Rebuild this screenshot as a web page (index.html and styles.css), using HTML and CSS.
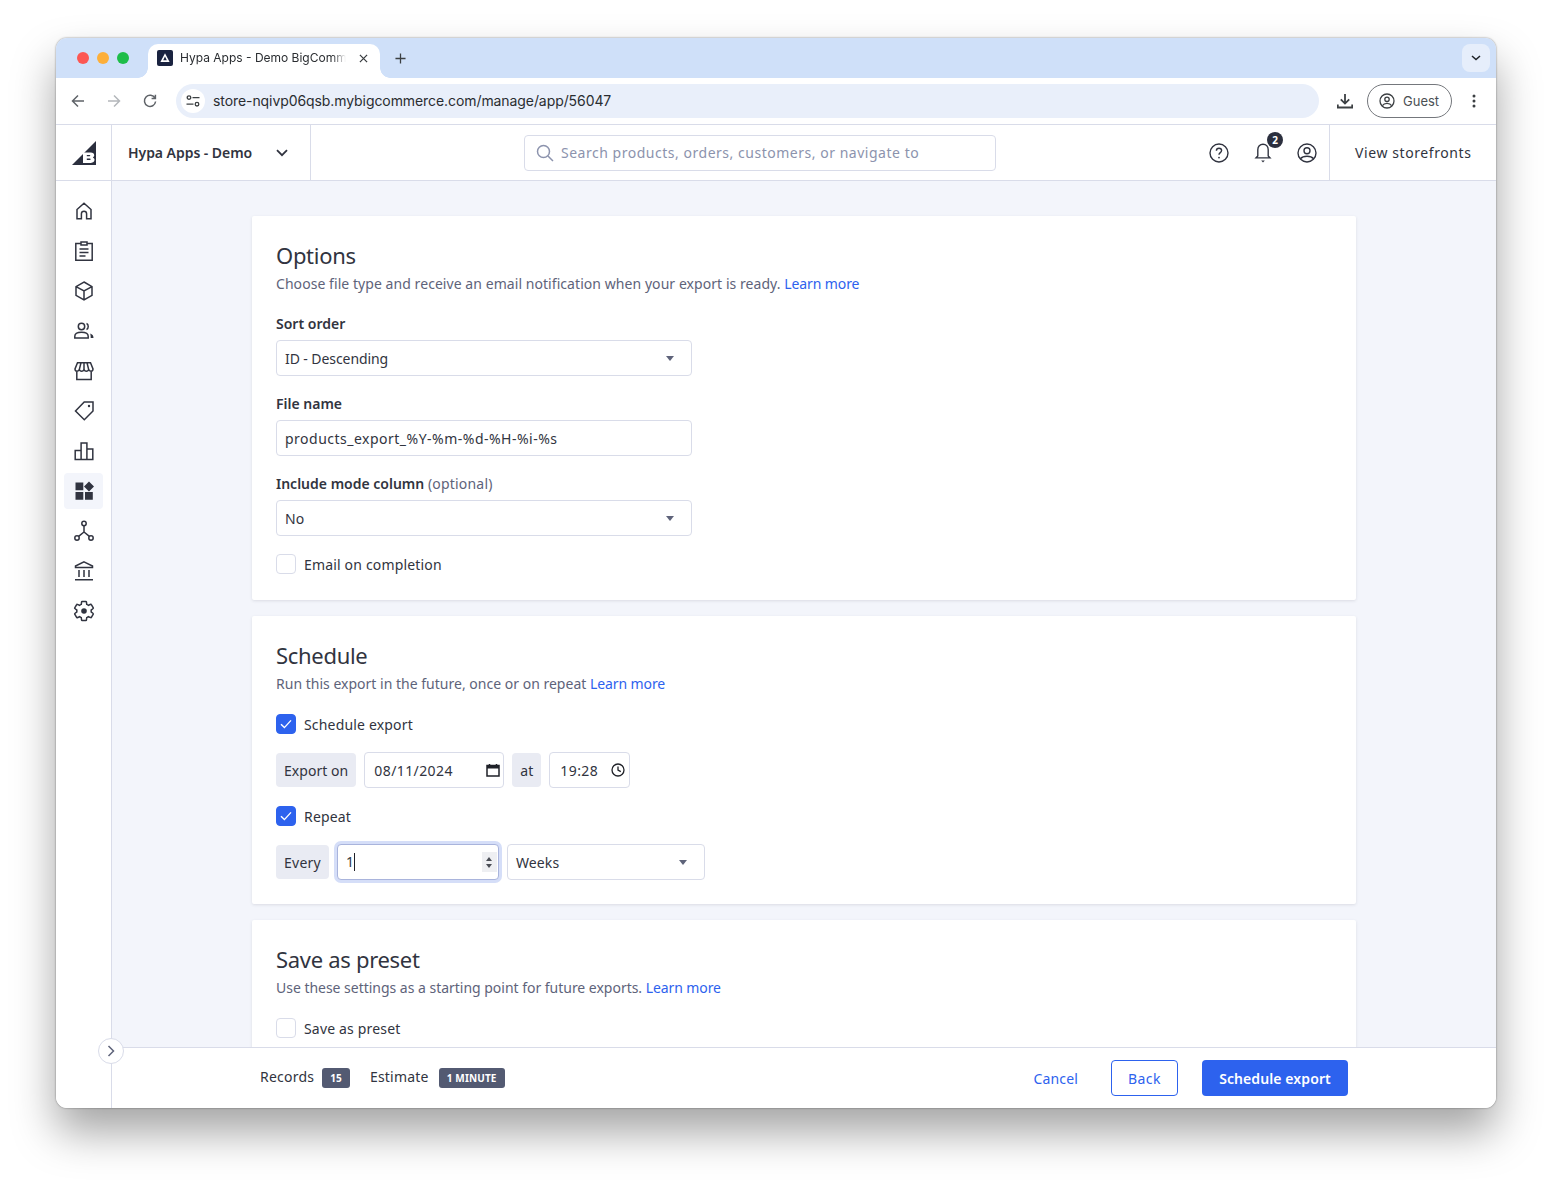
FILE: index.html
```html
<!DOCTYPE html>
<html lang="en">
<head>
<meta charset="utf-8">
<title>Hypa Apps - Demo BigCommerce</title>
<link rel="stylesheet" href="styles.css">
</head>
<body>
<div class="window">
  <div class="tabstrip">
    <div class="lights"><span class="light red"></span><span class="light amber"></span><span class="light green"></span></div>
    <div class="tab">
      <svg class="favicon" viewBox="0 0 16 16"><rect width="16" height="16" rx="2" fill="#1a2340"/><path d="M8 3.2 12.6 12H3.4zM8 6.6 6.2 10.2h3.6z" fill="#fff" fill-rule="evenodd"/></svg>
      <span class="tab-title">Hypa Apps - Demo BigComm</span>
      <svg class="tab-close" viewBox="0 0 10 10"><path d="M1 1l8 8M9 1l-8 8" stroke="#3c4043" stroke-width="1.4" fill="none"/></svg>
    </div>
    <svg class="new-tab" viewBox="0 0 12 12"><path d="M6 .5v11M.5 6h11" stroke="#3c4043" stroke-width="1.4" fill="none"/></svg>
    <div class="tab-search"><svg viewBox="0 0 10 6" width="10" height="6"><path d="M1 1l4 3.6L9 1" stroke="#1f2328" stroke-width="1.5" fill="none"/></svg></div>
  </div>
  <div class="toolbar">
    <svg class="tb-icon" viewBox="0 0 14 14"><path d="M13 7H2M7 1.5 1.5 7 7 12.5" stroke="#5f6368" stroke-width="1.5" fill="none"/></svg>
    <svg class="tb-icon" viewBox="0 0 14 14"><path d="M1 7h11M7 1.5 12.5 7 7 12.5" stroke="#b4b7bb" stroke-width="1.5" fill="none"/></svg>
    <svg class="tb-icon" viewBox="0 0 14 14"><path d="M12 4.2A5.6 5.6 0 1 0 12.6 7.5M12.4 .8v3.8H8.6" stroke="#5f6368" stroke-width="1.5" fill="none"/></svg>
    <div class="omnibox">
      <span class="site-icon"><svg viewBox="0 0 14 12" width="14" height="12"><circle cx="3" cy="2.6" r="1.8" fill="none" stroke="#3c4043" stroke-width="1.3"/><path d="M6.5 2.6h7M.5 9.2h7" stroke="#3c4043" stroke-width="1.3"/><circle cx="11" cy="9.2" r="1.8" fill="none" stroke="#3c4043" stroke-width="1.3"/></svg></span>
      <span class="url">store-nqivp06qsb.mybigcommerce.com/manage/app/56047</span>
    </div>
    <svg class="download" viewBox="0 0 16 16"><path d="M8 1v9M3.8 6.4 8 10.6l4.2-4.2M.8 11.5v3h14.400v-3" stroke="#3c4043" stroke-width="1.800" fill="none"/></svg>
    <div class="guest">
      <svg viewBox="0 0 16 16" width="16" height="16"><circle cx="8" cy="8" r="7" fill="none" stroke="#3c4043" stroke-width="1.3"/><circle cx="8" cy="6.3" r="2.2" fill="none" stroke="#3c4043" stroke-width="1.3"/><path d="M3.4 12.6c1-1.6 2.8-2.2 4.6-2.2s3.6.6 4.6 2.2" fill="none" stroke="#3c4043" stroke-width="1.3"/></svg>
      <span>Guest</span>
    </div>
    <svg class="kebab" viewBox="0 0 4 14"><circle cx="2" cy="2" r="1.5" fill="#3c4043"/><circle cx="2" cy="7" r="1.5" fill="#3c4043"/><circle cx="2" cy="12" r="1.5" fill="#3c4043"/></svg>
  </div>
  <header class="apphead">
    <div class="brand"><svg viewBox="0 0 24 24" width="24" height="24"><path d="M24 0v24H0z" fill="#2b2f3e"/><path d="M11 11.500h7.800c2.100 0 3.400 1.100 3.400 2.700 0 1-.5 1.800-1.400 2.200 1.100.4 1.700 1.300 1.700 2.400 0 1.800-1.400 3.100-3.600 3.100H11zm3.800 3.700h2.700c.5 0 .8-.2.800-.6s-.3-.6-.8-.6h-2.700zm0 3.800h3c.6 0 .9-.2.900-.7s-.3-.7-.9-.7h-3z" fill="#fff" fill-rule="evenodd"/></svg></div>
    <div class="store"><span>Hypa Apps - Demo</span><svg viewBox="0 0 12 8" width="12" height="8"><path d="M1 1.2l5 5 5-5" stroke="#313440" stroke-width="1.8" fill="none"/></svg></div>
    <div class="search">
      <svg viewBox="0 0 18 18" width="18" height="18"><circle cx="7.5" cy="7.5" r="6" fill="none" stroke="#8c93ad" stroke-width="1.5"/><path d="M12 12l5 5" stroke="#8c93ad" stroke-width="1.5"/></svg>
      <span>Search products, orders, customers, or navigate to</span>
    </div>
    <div class="head-icons">
      <svg viewBox="0 0 20 20" width="20" height="20"><circle cx="10" cy="10" r="9" fill="none" stroke="#313440" stroke-width="1.4"/><path d="M7.4 7.8c0-1.5 1.2-2.5 2.6-2.5s2.6 1 2.6 2.3c0 2-2.6 2-2.6 4.2" fill="none" stroke="#313440" stroke-width="1.4"/><circle cx="10" cy="14.6" r=".9" fill="#313440"/></svg>
      <div class="bell">
        <svg viewBox="0 0 20 22" width="20" height="22"><path d="M10 2.2c-3.1 0-5.200 2.400-5.200 5.500v6.200l-1.800 2h14l-1.800-2V7.700c0-3.100-2.100-5.500-5.200-5.500z" fill="none" stroke="#313440" stroke-width="1.4"/><path d="M8.2 18.6h3.600L10 20.400z" fill="#313440"/></svg>
        <span class="bell-badge">2</span>
      </div>
      <svg viewBox="0 0 20 20" width="20" height="20"><circle cx="10" cy="10" r="9" fill="none" stroke="#313440" stroke-width="1.4"/><circle cx="10" cy="7.8" r="3" fill="none" stroke="#313440" stroke-width="1.4"/><path d="M3.4 15.8c1.600-2 4-2.600 6.600-2.600s5 .6 6.600 2.600" fill="none" stroke="#313440" stroke-width="1.4"/></svg>
    </div>
    <div class="storefronts">View storefronts</div>
  </header>
  <div class="body">
    <nav class="sidebar">
      <a class="nav-item"><svg viewBox="0 0 24 24"><path d="M5 19.800v-9.300L12 4.300l7 6.200v9.300h-4.400v-5a2.600 2.600 0 0 0-5.200 0v5z"/></svg></a>
      <a class="nav-item"><svg viewBox="0 0 24 24"><path d="M9 4.500H3.800v16.700h16.400V4.500H15M9 3h6v3H9zM7.500 10h9M7.500 13.500h9M7.500 17h6"/></svg></a>
      <a class="nav-item"><svg viewBox="0 0 24 24"><path d="M12 3l8 4.600v8.800L12 21l-8-4.600V7.600zM4 7.600 12 12l8-4.400M12 12v9"/></svg></a>
      <a class="nav-item"><svg viewBox="0 0 24 24"><circle cx="9.500" cy="7.500" r="3.200"/><path d="M2.800 19v-1.800c0-2.800 3.300-4 6.700-4s6.700 1.200 6.700 4V19z"/><path d="M14.500 4.500c2.300.7 2.300 5.300 0 6"/><path class="solid" d="M18.200 14.500c2 .8 3.300 2 3.300 4.500h-2.800c0-2-.2-3.300-.5-4.500z"/></svg></a>
      <a class="nav-item"><svg viewBox="0 0 24 24"><path d="M4.800 12.500v8h14.400v-8M5.500 3.800h13L21 10c0 2.800-3.500 2.800-4.300.6-1 2.200-3.700 2.200-4.700 0-1 2.200-3.700 2.200-4.700 0C6.500 12.800 3 12.800 3 10zM9 3.800 7.300 10.600M12 3.800v6.800M15 3.800l1.700 6.800"/></svg></a>
      <a class="nav-item"><svg viewBox="0 0 24 24"><path d="M21 3v9l-8.700 8.800L3.500 12l8.700-9z"/><circle class="solid" cx="17" cy="7" r="1.200"/></svg></a>
      <a class="nav-item"><svg viewBox="0 0 24 24"><path d="M3.200 20.500v-9h5.900v9zM9.100 20.500V4h5.800v16.500zM14.900 20.500V10h5.900v10.500z"/></svg></a>
      <a class="nav-item active"><svg viewBox="0 0 24 24"><path class="solid" d="M3.500 3.500h7.800v7.800H3.500zM3.500 13h7.800v7.800H3.500zM13 13h7.800v7.800H13zM17 2.400l5 5-5 5-5-5z"/></svg></a>
      <a class="nav-item"><svg viewBox="0 0 24 24"><circle cx="12" cy="4.500" r="2.200"/><circle cx="5" cy="19" r="2.200"/><circle cx="19" cy="19" r="2.200"/><path d="M12 6.700V13M12 13l-5.400 4.400M12 13l5.400 4.400"/></svg></a>
      <a class="nav-item"><svg viewBox="0 0 24 24"><path d="M12 2.800 20.500 7v1.500h-17V7zM7 11v7M12 11v7M17 11v7M3 20.800h18"/></svg></a>
      <a class="nav-item"><svg viewBox="0 0 24 24"><path d="M19.140 12.940c.04-.3.06-.61.06-.94 0-.32-.02-.64-.07-.94l2.030-1.580c.18-.14.23-.41.12-.61l-1.920-3.320c-.12-.22-.37-.29-.59-.22l-2.390.96c-.5-.38-1.030-.7-1.620-.94l-.36-2.540c-.04-.24-.24-.41-.48-.41h-3.840c-.24 0-.43.17-.47.41l-.36 2.540c-.59.24-1.130.57-1.620.94l-2.390-.96c-.22-.08-.47 0-.59.22L2.740 8.870c-.12.21-.08.47.12.61l2.030 1.580c-.05.3-.09.63-.09.94s.02.64.07.94l-2.030 1.580c-.18.14-.23.41-.12.61l1.920 3.320c.12.22.37.29.59.22l2.390-.96c.5.38 1.030.7 1.620.94l.36 2.540c.05.24.24.41.48.41h3.840c.24 0 .44-.17.47-.41l.36-2.540c.59-.24 1.130-.56 1.620-.94l2.390.96c.22.08.47 0 .59-.22l1.920-3.320c.12-.22.07-.47-.12-.61l-2.010-1.580z"/><circle class="solid" cx="12" cy="12" r="2.800"/></svg></a>
    </nav>
    <div class="main">
      <main class="scroll">
        <section class="card">
          <h2>Options</h2>
          <p class="sub loose">Choose file type and receive an email notification when your export is ready. <a class="link">Learn more</a></p>
          <div class="field">
            <label class="label">Sort order</label>
            <div class="control select wide"><span class="tight">ID - Descending</span><i class="caret"></i></div>
          </div>
          <div class="field">
            <label class="label">File name</label>
            <div class="control wide"><span class="filename">products_export_%Y-%m-%d-%H-%i-%s</span></div>
          </div>
          <div class="field">
            <label class="label">Include mode column <span class="optional">(optional)</span></label>
            <div class="control select wide"><span>No</span><i class="caret"></i></div>
          </div>
          <div class="check"><span class="box"></span><span>Email on completion</span></div>
        </section>
        <section class="card">
          <h2>Schedule</h2>
          <p class="sub">Run this export in the future, once or on repeat <a class="link">Learn more</a></p>
          <div class="check"><span class="box on"><svg viewBox="0 0 12 10" width="12" height="10"><path d="M1 5.200l3.400 3.400L11 1.400" stroke="#fff" stroke-width="1.400" fill="none"/></svg></span><span>Schedule export</span></div>
          <div class="inline">
            <span class="chip">Export on</span>
            <div class="control date"><span>08/11/2024</span><svg viewBox="0 0 14 14" width="14" height="14"><path d="M1 2.500h12v10.500H1zM3.500 1v2M10.500 1v2" fill="none" stroke="#1f2128" stroke-width="1.500"/><path d="M1 2.500h12v3H1z" fill="#1f2128"/></svg></div>
            <span class="chip">at</span>
            <div class="control time"><span>19:28</span><svg viewBox="0 0 14 14" width="14" height="14"><circle cx="7" cy="7" r="6" fill="none" stroke="#1f2128" stroke-width="1.300"/><path d="M7 3.400V7l2.800 1.600" fill="none" stroke="#1f2128" stroke-width="1.300"/></svg></div>
          </div>
          <div class="check"><span class="box on"><svg viewBox="0 0 12 10" width="12" height="10"><path d="M1 5.200l3.400 3.400L11 1.400" stroke="#fff" stroke-width="1.400" fill="none"/></svg></span><span>Repeat</span></div>
          <div class="inline">
            <span class="chip every">Every</span>
            <div class="control number"><span class="caret-text">1</span><span class="spin"><i class="up"></i><i class="down"></i></span></div>
            <div class="control select weeks"><span>Weeks</span><i class="caret"></i></div>
          </div>
        </section>
        <section class="card">
          <h2>Save as preset</h2>
          <p class="sub snug">Use these settings as a starting point for future exports. <a class="link">Learn more</a></p>
          <div class="check"><span class="box"></span><span>Save as preset</span></div>
        </section>
      </main>
      <footer class="actions">
        <span class="stat">Records</span><span class="badge">15</span>
        <span class="stat est">Estimate</span><span class="badge wide-gap">1 MINUTE</span>
        <a class="cancel">Cancel</a>
        <a class="btn back">Back</a>
        <a class="btn primary">Schedule export</a>
      </footer>
    </div>
    <button class="collapse" aria-label="Expand"><svg viewBox="0 0 8 12" width="8" height="12"><path d="M1.500 1l5 5-5 5" stroke="#5e637a" stroke-width="1.500" fill="none"/></svg></button>
  </div>
</div>
</body>
</html>
```

FILE: styles.css
```css
* { box-sizing: border-box; }
html, body { margin: 0; height: 100%; }
body {
  width: 1552px; height: 1182px; overflow: hidden;
  background: #fff; padding: 38px 56px 74px;
  font-family: "Noto Sans", "Open Sans", sans-serif;
  font-size: 14px; color: #313440;
}
.window {
  height: 1070px; display: flex; flex-direction: column; overflow: hidden;
  background: #fff; border-radius: 11px;
  box-shadow: 0 24px 44px rgba(0,0,0,.36), 0 0 2px rgba(0,0,0,.5);
}

/* browser chrome */
.tabstrip { height: 40px; flex: none; background: #cfe0f9; display: flex; align-items: flex-end; position: relative; font-family: Inter, sans-serif; }
.lights { display: flex; gap: 8px; width: 92px; padding: 0 0 14px 21px; flex: none; }
.light { width: 12px; height: 12px; border-radius: 50%; }
.red { background: #fc5753; } .amber { background: #fdaf3a; } .green { background: #1ebd49; }
.tab { width: 232px; height: 34px; background: #fff; border-radius: 10px 10px 0 0; display: flex; align-items: center; padding: 0 10px 6px 9px; gap: 7px; font-size: 12px; color: #2a2d31; position: relative; }
.tab::before, .tab::after { content: ""; position: absolute; bottom: 0; width: 10px; height: 10px; background: radial-gradient(circle at 0 0, transparent 9.500px, #fff 10px); }
.tab::before { left: -10px; }
.tab::after { right: -10px; background: radial-gradient(circle at 100% 0, transparent 9.500px, #fff 10px); }
.favicon { width: 16px; height: 16px; flex: none; }
.tab-title { flex: none; width: 166px; white-space: nowrap; padding-bottom: 2px; -webkit-mask-image: linear-gradient(90deg, #000 152px, transparent 166px); mask-image: linear-gradient(90deg, #000 152px, transparent 166px); }
.tab-close { width: 9px; height: 9px; margin-left: 6px; flex: none; }
.new-tab { width: 11px; height: 11px; margin: 0 0 14px 15px; flex: none; }
.tab-search { position: absolute; right: 6px; top: 6px; width: 28px; height: 28px; border-radius: 8px; background: #e6eefb; display: flex; align-items: center; justify-content: center; }
.toolbar { height: 47px; flex: none; display: flex; align-items: center; padding: 0 0 1px 15px; border-bottom: 1px solid #d9dce9; background: #fff; font-family: Inter, sans-serif; }
.tb-icon { width: 14px; height: 14px; margin-right: 22px; flex: none; }
.omnibox { width: 1143px; height: 34px; margin-left: -3px; border-radius: 17px; background: #e9effa; display: flex; align-items: center; padding-left: 5px; flex: none; }
.site-icon { width: 24px; height: 24px; border-radius: 50%; background: #fff; display: flex; align-items: center; justify-content: center; }
.url { margin-left: 8px; font-size: 14px; letter-spacing: -.08px; color: #2a2d31; }
.download { width: 16px; height: 16px; margin-left: 18px; flex: none; }
.guest { width: 85px; height: 34px; margin-left: 14px; border: 1px solid #74777c; border-radius: 17px; display: flex; align-items: center; gap: 8px; padding-left: 11px; font-size: 13px; color: #4b4f54; flex: none; }
.kebab { width: 4px; height: 14px; margin-left: 20px; flex: none; }

/* app header */
.apphead { height: 56px; flex: none; display: flex; align-items: center; border-bottom: 1px solid #d9dce9; }
.brand { width: 56px; height: 100%; border-right: 1px solid #d9dce9; display: flex; align-items: center; justify-content: center; flex: none; }
.store { width: 199px; height: 100%; border-right: 1px solid #d9dce9; display: flex; align-items: center; justify-content: space-between; padding: 0 22px 0 16px; font-weight: 600; letter-spacing: -.05px; flex: none; }
.search { width: 472px; height: 36px; margin-left: 213px; border: 1px solid #d9dce9; border-radius: 4px; display: flex; align-items: center; gap: 7px; padding-left: 11px; color: #8c93ad; letter-spacing: .52px; flex: none; }
.head-icons { display: flex; align-items: center; gap: 24px; margin-left: 213px; flex: none; }
.bell { position: relative; width: 20px; height: 22px; }
.bell-badge { position: absolute; left: 14px; top: -10px; width: 16px; height: 16px; border-radius: 50%; background: #2b2f3e; color: #fff; font-size: 10px; font-weight: 700; display: flex; align-items: center; justify-content: center; }
.storefronts { height: 100%; flex: 1; margin-left: 12px; border-left: 1px solid #d9dce9; display: flex; align-items: center; padding-left: 25px; color: #313440; letter-spacing: .59px; }

/* layout */
.body { flex: 1; min-height: 0; display: flex; position: relative; }
.sidebar { width: 56px; flex: none; border-right: 1px solid #d9dce9; padding: 12px 8px 0; display: flex; flex-direction: column; gap: 4px; background: #fff; }
.nav-item { height: 36px; width: 39px; border-radius: 4px; display: flex; align-items: center; justify-content: center; }
.nav-item.active { background: #f3f5fb; }
.nav-item svg { width: 24px; height: 24px; fill: none; stroke: #313440; stroke-width: 1.500; }
.nav-item svg .solid { fill: #313440; stroke: none; }
.main { flex: 1; min-width: 0; display: flex; flex-direction: column; }
.scroll { flex: 1; min-height: 0; overflow: hidden; background: #f3f5fb; padding: 35px 140px 0; }
.card { background: #fff; padding: 24px; margin-bottom: 16px; border-radius: 2px; box-shadow: 0 1px 3px rgba(49,52,64,.12); }
h2 { margin: 0 0 2px; font-size: 22px; line-height: 30px; font-weight: 400; color: #313440; letter-spacing: -.3px; }
.sub { margin: 0; line-height: 24px; color: #5e637a; letter-spacing: .01px; }
.sub.loose { letter-spacing: .06px; }
.sub.snug { letter-spacing: -.02px; }
.link { color: #2d62ee; letter-spacing: -.1px; }
.field { margin-top: 16px; }
.label { display: block; line-height: 24px; margin-bottom: 4px; font-weight: 600; }
.optional { font-weight: 400; color: #5e637a; letter-spacing: .2px; }
.control { height: 36px; border: 1px solid #d9dce9; border-radius: 4px; background: #fff; display: flex; align-items: center; justify-content: space-between; padding: 0 8px; }
.filename { letter-spacing: .49px; }
.tight { letter-spacing: -.08px; }
.wide { width: 416px; }
.select { padding-right: 17px; }
.caret { width: 0; height: 0; border-left: 4px solid transparent; border-right: 4px solid transparent; border-top: 5px solid #5e637a; }
.check { display: flex; align-items: center; gap: 8px; height: 24px; margin-top: 16px; letter-spacing: .17px; }
.box { width: 20px; height: 20px; border: 1px solid #d9dce9; border-radius: 4px; background: #fff; display: flex; align-items: center; justify-content: center; }
.box.on { background: #2d62ee; border-color: #2d62ee; }
.inline { display: flex; gap: 8px; height: 36px; margin-top: 16px; align-items: center; }
.chip { height: 34px; padding: 0 8px; background: #e9ebf3; border-radius: 4px; display: flex; align-items: center; color: #313440; letter-spacing: .05px; }
.every { letter-spacing: .25px; }
.date { width: 140px; padding: 0 3px 0 9px; }
.date span, .time span { letter-spacing: .4px; }
.time { width: 81px; padding: 0 4px 0 10px; }
.number { width: 162px; padding: 0 1px 0 8px; border-color: #a9b4dc; box-shadow: 0 0 0 3px #d5def8; }
.caret-text { border-right: 1px solid #1f2128; height: 18px; line-height: 18px; }
.spin { width: 15px; height: 20px; background: #eeeff2; display: flex; flex-direction: column; align-items: center; justify-content: center; gap: 3px; }
.spin i { width: 0; height: 0; border-left: 3.500px solid transparent; border-right: 3.500px solid transparent; }
.up { border-bottom: 4px solid #4a4d55; }
.down { border-top: 4px solid #4a4d55; }
.weeks { width: 198px; }
.weeks span { letter-spacing: .1px; }

/* footer */
.actions { height: 61px; flex: none; background: #fff; border-top: 1px solid #d9dce9; display: flex; align-items: center; padding: 0 148px; position: relative; }
.stat { color: #313440; letter-spacing: .22px; padding-bottom: 3px; }
.est { margin-left: 20px; }
.badge { height: 20px; margin-left: 8px; padding: 0 8px; background: #535a72; color: #fff; border-radius: 3px; font-size: 10px; font-weight: 700; letter-spacing: .15px; display: flex; align-items: center; }
.wide-gap { margin-left: 10px; }
.cancel { margin-left: auto; margin-right: 33px; color: #2d62ee; letter-spacing: .15px; }
.btn { height: 36px; border-radius: 4px; display: flex; align-items: center; justify-content: center; }
.back { width: 67px; border: 1px solid #2d62ee; color: #2d62ee; margin-right: 24px; letter-spacing: .45px; }
.primary { width: 146px; background: #2d62ee; color: #fff; font-weight: 600; letter-spacing: .1px; }
.collapse { position: absolute; left: 42px; bottom: 44px; width: 26px; height: 26px; padding: 0; border: 1px solid #d9dce9; border-radius: 50%; background: #fff; display: flex; align-items: center; justify-content: center; z-index: 2; }
```
